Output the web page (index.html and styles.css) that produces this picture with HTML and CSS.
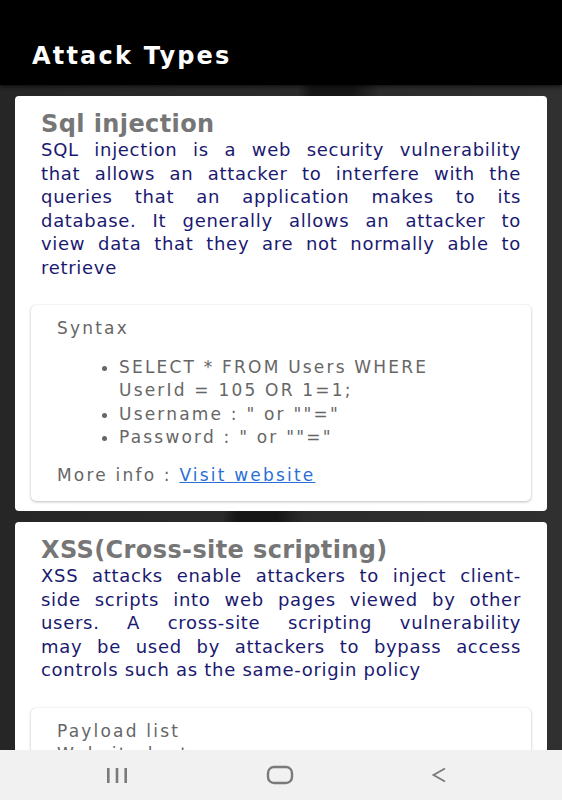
FILE: index.html
```html
<!DOCTYPE html>
<html>
    <head>
        <meta charset="utf-8">
        <link rel="stylesheet" href="styles.css">
        <title>Attack Types</title>
    </head>

    <body>
        <div class="screen">
            <header class="app-bar">
                <h1 class="app-title">Attack Types</h1>
            </header>

            <main class="content">
                <section class="attack-card">
                    <h2 class="attack-title">Sql injection</h2>
                    <p class="attack-desc">
                        <span class="line">SQL injection is a web security vulnerability</span>
                        <span class="line">that allows an attacker to interfere with the</span>
                        <span class="line">queries that an application makes to its</span>
                        <span class="line">database. It generally allows an attacker to</span>
                        <span class="line">view data that they are not normally able to</span>
                        retrieve
                    </p>

                    <div class="info-card">
                        <div class="info-label">Syntax</div>
                        <ul class="info-list">
                            <li>SELECT * FROM Users WHERE UserId = 105 OR 1=1;</li>
                            <li>Username : " or ""="</li>
                            <li>Password : " or ""="</li>
                        </ul>
                        <div class="info-more">More info : <a href="#" class="info-link">Visit website</a></div>
                    </div>
                </section>

                <section class="attack-card">
                    <h2 class="attack-title">XSS(Cross-site scripting)</h2>
                    <p class="attack-desc">
                        <span class="line">XSS attacks enable attackers to inject client-</span>
                        <span class="line">side scripts into web pages viewed by other</span>
                        <span class="line">users. A cross-site scripting vulnerability</span>
                        <span class="line">may be used by attackers to bypass access</span>
                        controls such as the same-origin policy
                    </p>

                    <div class="info-card">
                        <div class="info-label">Payload list</div>
                        <div class="info-label">Website lent</div>
                    </div>
                </section>
            </main>

            <nav class="nav-bar">
                <svg class="nav-icon" width="24" height="18" viewBox="0 0 24 18">
                    <rect x="2" y="2" width="2.6" height="15" fill="#7a7a7a"/>
                    <rect x="10.7" y="2" width="2.6" height="15" fill="#7a7a7a"/>
                    <rect x="19.4" y="2" width="2.6" height="15" fill="#7a7a7a"/>
                </svg>
                <svg class="nav-icon" width="28" height="20" viewBox="0 0 28 20">
                    <rect x="2" y="2" width="24" height="16" rx="6" fill="none" stroke="#7a7a7a" stroke-width="2.4"/>
                </svg>
                <svg class="nav-icon" width="18" height="18" viewBox="0 0 18 18">
                    <path d="M15 2.5 L3.5 9 L15 15.5" fill="none" stroke="#7a7a7a" stroke-width="1.8"/>
                </svg>
            </nav>
        </div>
    </body>
</html>
```

FILE: styles.css
```css
body {
    margin: 0;
    background-color: #000;
    font-family: "DejaVu Sans", "Roboto", sans-serif;
}

.screen {
    width: 562px;
    height: 800px;
    display: flex;
    flex-direction: column;
    overflow: hidden;
}

.app-bar {
    height: 85px;
    flex-shrink: 0;
    background-color: #000;
    display: flex;
    align-items: flex-end;
    padding: 0 32px 14px;
    box-sizing: border-box;
    box-shadow: 0 2px 4px rgba(0, 0, 0, 0.6);
    position: relative;
    z-index: 1;
}

.app-title {
    margin: 0;
    color: #fff;
    font-size: 24px;
    font-weight: bold;
    letter-spacing: 2.2px;
    line-height: 30px;
}

.content {
    flex: 1;
    overflow: hidden;
    padding: 11px 15px 0;
    display: flex;
    flex-direction: column;
    gap: 11px;
    background-color: #2b2b2b;
    background-image: linear-gradient(100deg, transparent 44%, #161616 46%, #161616 52%, transparent 56%),
                      linear-gradient(to right, #262626, #303030);
}

.attack-card {
    background: #fff;
    border-radius: 4px;
    padding: 14px 16px 10px;
    flex-shrink: 0;
}

.attack-title {
    margin: 0;
    padding: 0 10px;
    color: #767676;
    font-size: 24px;
    font-weight: bold;
    letter-spacing: 0.4px;
    line-height: 28px;
}

.attack-desc {
    margin: 0;
    padding: 0 10px;
    color: #1a1970;
    font-size: 18px;
    line-height: 23.5px;
    letter-spacing: 0.7px;
}

.attack-desc .line {
    display: block;
    text-align: justify;
    text-align-last: justify;
}

.info-card {
    margin-top: 26px;
    padding: 12px 26px 14px;
    border-radius: 5px;
    background: #fff;
    box-shadow: 0 1px 3px rgba(0, 0, 0, 0.25), 0 0 1px rgba(0, 0, 0, 0.12);
    color: #666;
    font-size: 17px;
    line-height: 23.5px;
    letter-spacing: 2.2px;
}

.info-list {
    margin: 15px 0 14px;
    padding-left: 62px;
    padding-right: 24px;
}

.info-link {
    color: #2a6fd6;
}

.nav-bar {
    height: 50px;
    flex-shrink: 0;
    background-color: #f1f1f1;
    display: flex;
    align-items: center;
    justify-content: space-between;
    padding: 0 114px 0 105px;
}

.nav-icon {
    display: block;
}
```
